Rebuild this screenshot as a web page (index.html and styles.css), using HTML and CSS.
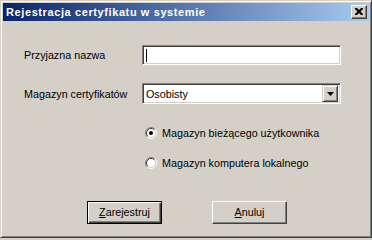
FILE: index.html
```html
<!DOCTYPE html>
<html lang="pl">
<head>
<meta charset="utf-8">
<title>Rejestracja certyfikatu w systemie</title>
<link rel="stylesheet" href="styles.css">
</head>
<body>
<div class="window">
  <div class="titlebar">
    <span class="title">Rejestracja certyfikatu w systemie</span>
    <span class="close">
      <svg width="8" height="7" viewBox="0 0 8 7"><path d="M0 0h2l2 2 2-2h2v1l-2.5 2.5L8 6v1H6L4 5 2 7H0V6l2.5-2.5L0 1z" fill="#000"/></svg>
    </span>
  </div>
  <div class="content">
    <div class="fields">
      <label class="label">Przyjazna nazwa</label>
      <div class="textbox"><span class="caret"></span></div>
      <label class="label">Magazyn certyfikatów</label>
      <div class="combo">
        <span class="combo-text">Osobisty</span>
        <span class="combo-btn"><svg width="7" height="4" viewBox="0 0 7 4"><path d="M0 0h7L3.5 4z" fill="#000"/></svg></span>
      </div>
    </div>
    <div class="radios">
      <div class="radio-row">
        <svg class="radio" width="12" height="12" viewBox="0 0 12 12">
          <circle cx="6" cy="6" r="4.5" fill="#fff"/>
          <path d="M2.11 9.89A5.5 5.5 0 0 1 9.89 2.11" fill="none" stroke="#808080"/>
          <path d="M9.89 2.11A5.5 5.5 0 0 1 2.11 9.89" fill="none" stroke="#fff"/>
          <path d="M2.82 9.18A4.5 4.5 0 0 1 9.18 2.82" fill="none" stroke="#404040"/>
          <path d="M9.18 2.82A4.5 4.5 0 0 1 2.82 9.18" fill="none" stroke="#d4d0c8"/>
          <circle cx="6" cy="6" r="2" fill="#000"/>
        </svg>
        <span>Magazyn bieżącego użytkownika</span>
      </div>
      <div class="radio-row">
        <svg class="radio" width="12" height="12" viewBox="0 0 12 12">
          <circle cx="6" cy="6" r="4.5" fill="#fff"/>
          <path d="M2.11 9.89A5.5 5.5 0 0 1 9.89 2.11" fill="none" stroke="#808080"/>
          <path d="M9.89 2.11A5.5 5.5 0 0 1 2.11 9.89" fill="none" stroke="#fff"/>
          <path d="M2.82 9.18A4.5 4.5 0 0 1 9.18 2.82" fill="none" stroke="#404040"/>
          <path d="M9.18 2.82A4.5 4.5 0 0 1 2.82 9.18" fill="none" stroke="#d4d0c8"/>
        </svg>
        <span>Magazyn komputera lokalnego</span>
      </div>
    </div>
    <div class="buttons">
      <div class="btn default"><span class="btn-inner"><u>Z</u>arejestruj</span></div>
      <div class="btn"><span class="btn-inner"><u>A</u>nuluj</span></div>
    </div>
  </div>
</div>
</body>
</html>
```

FILE: styles.css
```css
html, body {
  margin: 0;
  padding: 0;
  background: #d4d0c8;
}
body {
  font-family: "Liberation Sans", Arial, sans-serif;
  font-size: 10.75px;
  color: #000;
}
.window {
  width: 372px;
  height: 238px;
  box-sizing: border-box;
  border: 1px solid;
  border-color: #d4d0c8 #404040 #404040 #d4d0c8;
  box-shadow: inset 1px 1px 0 #fff, inset -1px -1px 0 #808080;
  padding: 2px;
  background: #d4d0c8;
  display: flex;
  flex-direction: column;
}
.titlebar {
  height: 18px;
  flex: none;
  background: linear-gradient(to right, #0a246a, #a6caf0);
  display: flex;
  align-items: center;
  justify-content: space-between;
  padding: 0 2px 0 3px;
}
.title {
  color: #fff;
  font-weight: bold;
  font-size: 11px;
  letter-spacing: 0.6px;
}
.close {
  width: 16px;
  height: 14px;
  box-sizing: border-box;
  background: #d4d0c8;
  border: 1px solid;
  border-color: #fff #404040 #404040 #fff;
  box-shadow: inset -1px -1px 0 #808080;
  display: flex;
  align-items: center;
  justify-content: center;
  padding: 0 1px 1px 0;
}
.close svg { display: block; }
.content {
  flex: 1;
  display: flex;
  flex-direction: column;
  padding: 24px 0 0 21px;
}
.fields {
  display: grid;
  grid-template-columns: 118px 199px;
  grid-template-rows: 20px 21px;
  row-gap: 18px;
  align-items: center;
}
.textbox, .combo {
  box-sizing: border-box;
  background: #fff;
  border: 1px solid;
  border-color: #808080 #fff #fff #808080;
  box-shadow: inset 1px 1px 0 #404040, inset -1px -1px 0 #d4d0c8;
  height: 100%;
}
.textbox {
  display: flex;
  align-items: center;
  padding-left: 3px;
}
.caret {
  width: 1px;
  height: 13px;
  background: #000;
}
.combo {
  display: flex;
  align-items: center;
  justify-content: space-between;
  padding: 2px;
}
.combo-text {
  padding-left: 1px;
}
.combo-btn {
  width: 16px;
  height: 17px;
  box-sizing: border-box;
  background: #d4d0c8;
  border: 1px solid;
  border-color: #d4d0c8 #404040 #404040 #d4d0c8;
  box-shadow: inset 1px 1px 0 #fff, inset -1px -1px 0 #808080;
  display: flex;
  align-items: center;
  justify-content: center;
}
.combo-btn svg { display: block; }
.radios {
  display: flex;
  flex-direction: column;
  gap: 14px;
  margin: 21px 0 0 121px;
}
.radio-row {
  display: flex;
  align-items: center;
  height: 16px;
  gap: 5px;
}
.radio {
  display: block;
  flex: none;
}
.buttons {
  display: flex;
  gap: 50px;
  margin: 30px 0 0 63px;
}
.btn {
  width: 75px;
  height: 23px;
  box-sizing: border-box;
  background: #d4d0c8;
  border: 1px solid;
  border-color: #fff #404040 #404040 #fff;
  box-shadow: inset -1px -1px 0 #808080;
  display: flex;
  align-items: center;
  justify-content: center;
}
.btn.default {
  border: 1px solid #000;
  box-shadow: inset 1px 1px 0 #fff, inset -1px -1px 0 #404040, inset -2px -2px 0 #808080;
}
.btn-inner {
  padding-bottom: 1px;
}
.btn u {
  text-decoration: underline;
  text-underline-offset: 1px;
}
```
